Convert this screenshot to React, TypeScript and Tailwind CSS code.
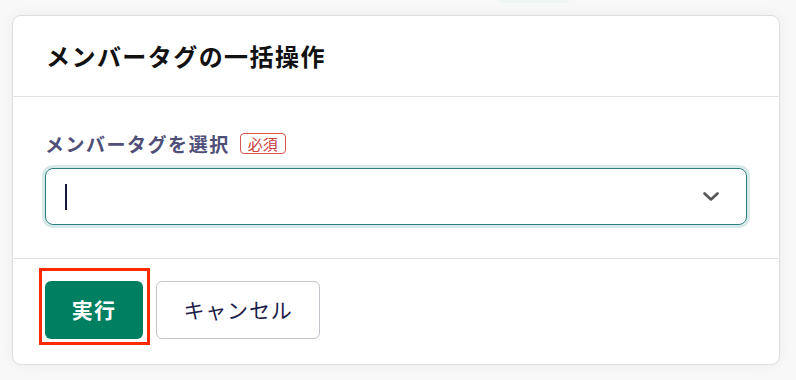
import React from "react";

export default function App() {
  const jp = { fontFamily: '"Noto Sans CJK JP", "Noto Sans", sans-serif' };
  return (
    <div className="relative w-[796px] h-[380px] bg-[#f8f8f8] overflow-hidden" style={jp}>
      <div className="absolute left-[497px] top-[-8px] w-[74px] h-[11px] rounded-b-[6px] bg-[#eef7f2]" />
      <div className="absolute left-[12px] top-[15px] w-[768px] h-[350px] flex flex-col bg-white border border-[#dedede] rounded-[9px] shadow-[0_0_14px_rgba(0,0,0,0.05)]">
        <div className="h-[81px] shrink-0 flex items-center px-[33px] border-b border-[#e2e2e6]">
          <h1 className="text-[24px] font-bold text-[#111] tracking-[0.06em] leading-none">メンバータグの一括操作</h1>
        </div>
        <div className="h-[162px] shrink-0 px-8 pt-[33px] border-b border-[#e2e2e6]">
          <div className="flex items-center gap-[10px] h-[26px] mb-[12px]">
            <span className="text-[19px] font-bold text-[#4f4f78] tracking-[0.08em] leading-none">メンバータグを選択</span>
            <span className="h-[21px] px-[7px] flex items-center border border-[#d9534f] rounded-[4px] text-[15px] text-[#c9403b] leading-none">必須</span>
          </div>
          <div className="relative h-[57px] w-[702px] rounded-[8px] border-[1.5px] border-[#2b7f7c] shadow-[0_0_0_3px_#d6eaea] flex items-center pl-[19px]">
            <div className="w-[2px] h-[26px] bg-[#14143c]" />
            <svg className="absolute right-[26px] top-[20px]" width="18" height="14" viewBox="0 0 18 14" fill="none">
              <path d="M2.5 4.5 L9 10.5 L15.5 4.5" stroke="#555" strokeWidth="2.6" strokeLinecap="round" strokeLinejoin="round" />
            </svg>
          </div>
        </div>
        <div className="relative flex-1 flex items-start gap-[13px] px-8 pt-[22px]">
          <button className="w-[98px] h-[58px] rounded-[6px] bg-[#008061] text-white text-[21px] font-bold tracking-[0.06em]">実行</button>
          <button className="w-[164px] h-[58px] rounded-[6px] bg-white border border-[#c4c4cc] text-[#1c1c48] text-[21px] tracking-[0.04em]">キャンセル</button>
          <div className="absolute left-[26px] top-[9px] w-[111px] h-[77px] border-[3px] border-[#ff2a00] pointer-events-none" />
        </div>
      </div>
    </div>
  );
}
